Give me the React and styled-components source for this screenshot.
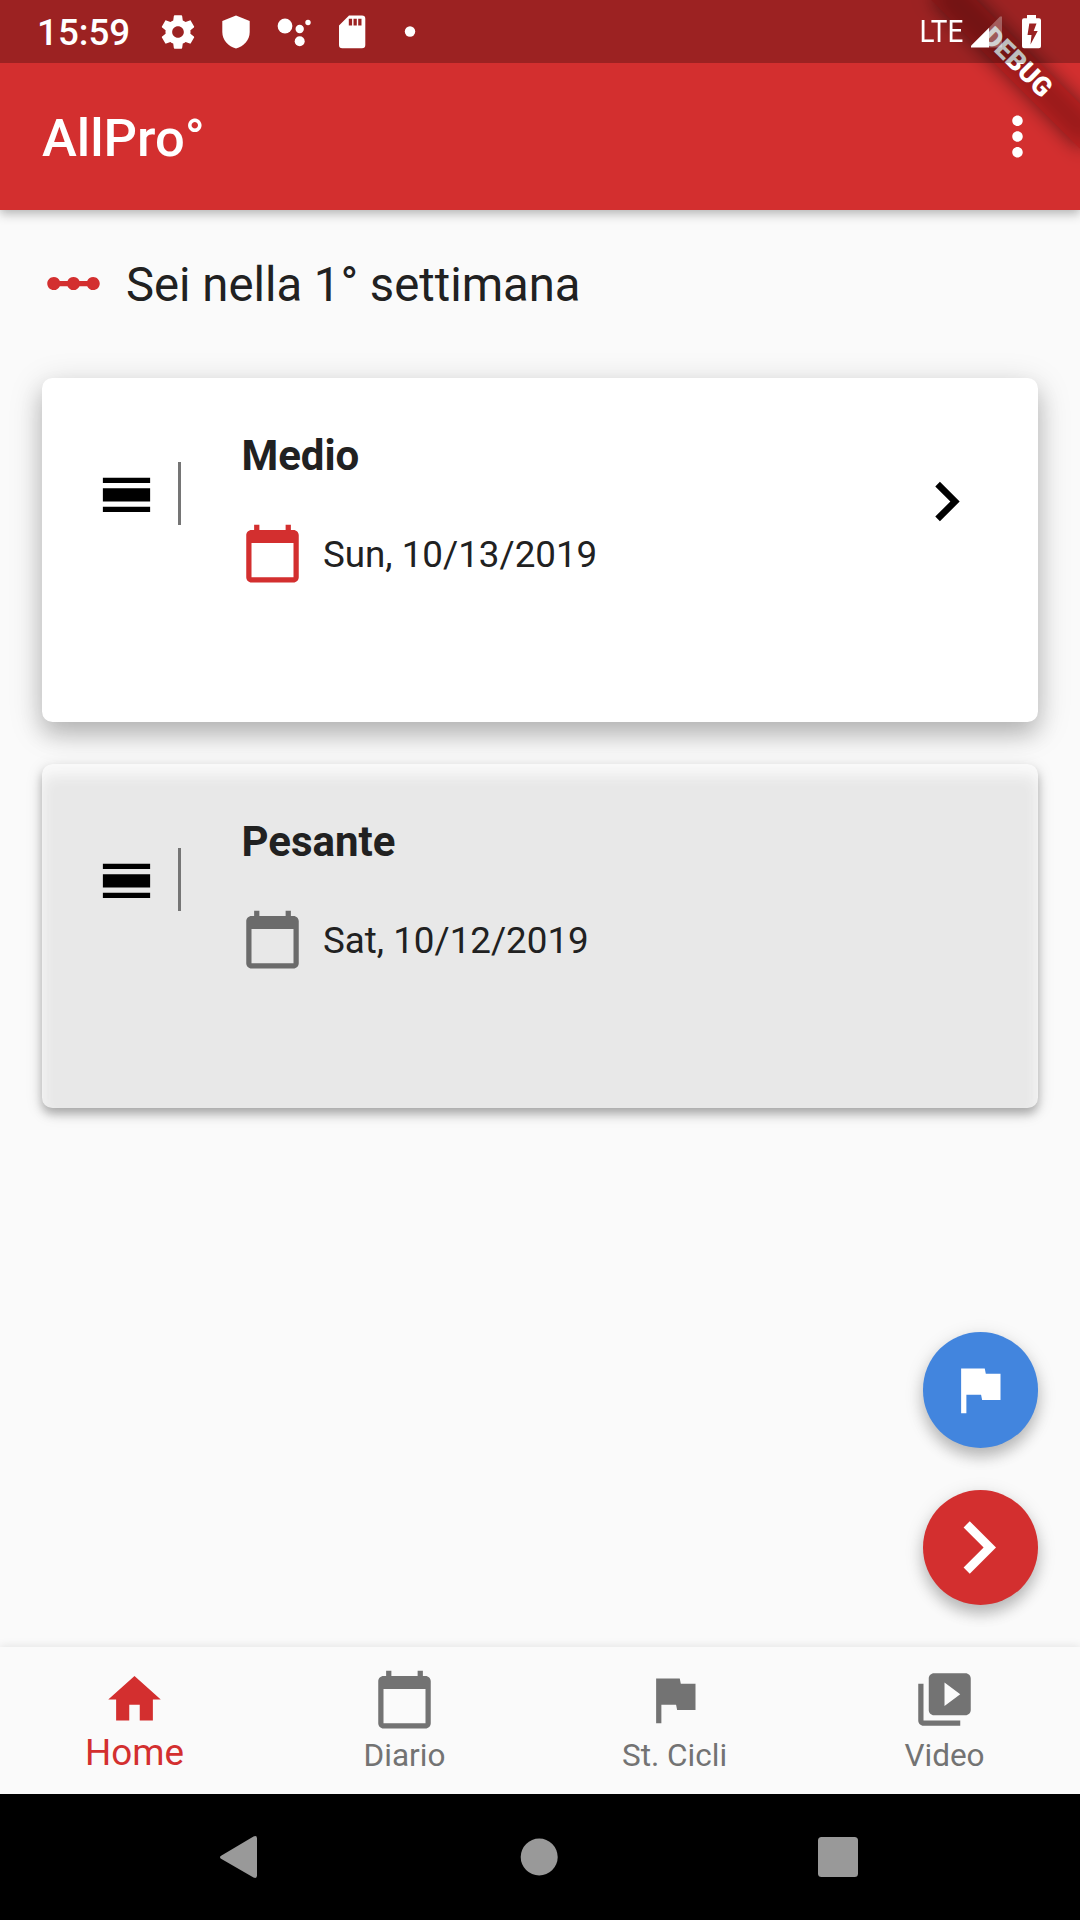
import styled, { createGlobalStyle } from 'styled-components'

const GlobalStyle = createGlobalStyle`
    * {
        box-sizing: border-box;
    }

    body {
        background: #fafafa;
        color: #212121;
        font-family: Roboto, "Liberation Sans", sans-serif;
        margin: 0;
    }
`

const Screen = styled.div`
    background: #fafafa;
    display: flex;
    flex-direction: column;
    height: 1920px;
    overflow: hidden;
    position: relative;
    width: 1080px;
`

const AppBar = styled.header`
    align-items: center;
    background: #d32f2f;
    box-shadow: 0 5px 10px rgba( 0, 0, 0, 0.2 ), 0 1px 8px rgba( 0, 0, 0, 0.1 );
    color: #fff;
    display: flex;
    flex: none;
    height: 210px;
    justify-content: space-between;
    padding: 63px 31.5px 0 42px;
`

const AppTitle = styled.h1`
    font-size: 52.5px;
    font-weight: 500;
    line-height: 62px;
    margin: 3px 0 0;
`

// The band is translucent, so its blurred shadow also darkens it from below
const DebugBanner = styled.div`
    color: #fff;
    font-size: 26.8px;
    font-weight: 900;
    height: 31.5px;
    line-height: 31.5px;
    position: absolute;
    right: -42px;
    text-align: center;
    top: 47.4px;
    transform: rotate( 45deg );
    width: 210px;

    &::before,
    &::after {
        content: "";
        inset: 0;
        position: absolute;
        z-index: -1;
    }

    &::before {
        background: rgba( 0, 0, 0, 0.5 );
        filter: blur( 9.6px );
    }

    &::after {
        background: rgba( 183, 28, 28, 0.627 );
    }
`

// Translucent system bar on top of the app bar
const StatusBar = styled.div`
    align-items: center;
    background: rgba( 0, 0, 0, 0.26 );
    color: #fff;
    display: flex;
    height: 63px;
    inset: 0 0 auto;
    justify-content: space-between;
    padding: 0 38px 0 37px;
    position: absolute;
`

const StatusGroup = styled.div`
    align-items: center;
    display: flex;
`

const Clock = styled.time`
    font-size: 36.75px;
    font-weight: 500;
    line-height: 44px;
    margin-top: 3px;
    width: 121px;
`

const Network = styled.span`
    font-size: 32px;
    line-height: 38px;
    margin: -2px -1px 0 0;
    transform: scaleX( 0.87 );
    transform-origin: right;
`

const Glyph = styled.svg`
    display: block;
    fill: currentColor;
    flex: none;
    height: ${ ( { $size = 63 } ) => $size }px;
    width: ${ ( { $size = 63 } ) => $size }px;
`

const StatusGlyph = styled( Glyph ).attrs( { viewBox: `0 0 40 40`, $size: 40 } )`
    margin-right: ${ ( { $gap = 0 } ) => $gap }px;
`

const Content = styled.main`
    display: flex;
    flex: 1;
    flex-direction: column;
    padding: 42px 42px 0;
    position: relative;
`

const WeekRow = styled.div`
    align-items: center;
    color: #d32f2f;
    display: flex;
    gap: 21px;
    height: 63px;
    margin-bottom: 63px;
`

const WeekText = styled.h2`
    color: #212121;
    font-size: 47.25px;
    font-weight: 400;
    line-height: 56px;
    margin: 2px 0 0;
`

const CardList = styled.div`
    display: flex;
    flex-direction: column;
    gap: 42px;
`

const Card = styled.article`
    background: ${ ( { $done } ) => $done ? `#e8e8e8` : `#fff` };
    border-radius: 10.5px;
    box-shadow: ${ ( { $done } ) => $done
        ? `0 6px 10px rgba( 0, 0, 0, 0.26 ), 0 4px 18px rgba( 0, 0, 0, 0.12 ), inset 0 11px 14px #fafafa`
        : `0 13px 22px rgba( 0, 0, 0, 0.16 ), 0 8px 34px rgba( 0, 0, 0, 0.18 )` };
    display: flex;
    height: 344px;
    padding: 53px 52.5px 0;
`

const Handle = styled.div`
    border-right: 3px solid #757575;
    color: #000;
    height: 63px;
    margin-top: 31px;
    width: 86.5px;
`

const Session = styled.div`
    flex: 1;
    padding-left: 60.4px;
`

const SessionName = styled.h3`
    font-size: 42px;
    font-weight: 700;
    line-height: 49px;
    margin: 0 0 42px;
`

const SessionDate = styled.div`
    align-items: center;
    color: #212121;
    display: flex;
    font-size: 36.75px;
    gap: 18.6px;
    line-height: 43px;
`

const DateText = styled.span`
    margin-top: 2px;
`

const CalendarIcon = styled( Glyph )`
    color: ${ ( { $done } ) => $done ? `#6b6b6b` : `#d32f2f` };
`

const OpenIcon = styled( Glyph )`
    color: #000;
    margin-top: 30.5px;
`

const FabColumn = styled.div`
    bottom: 42px;
    display: flex;
    flex-direction: column;
    gap: 42px;
    position: absolute;
    right: 42px;
`

const Fab = styled.button`
    align-items: center;
    background: ${ ( { $color } ) => $color };
    border: 0;
    border-radius: 50%;
    box-shadow: 0 9px 14px rgba( 0, 0, 0, 0.18 ), 0 5px 20px rgba( 0, 0, 0, 0.14 );
    color: #fff;
    display: flex;
    height: 115.5px;
    justify-content: center;
    padding: 0 ${ ( { $nudge = 0 } ) => $nudge }px 0 0;
    width: 115.5px;
`

const TabBar = styled.nav`
    background: #fafafa;
    box-shadow: 0 -2px 8px rgba( 0, 0, 0, 0.08 );
    display: grid;
    flex: none;
    grid-template-columns: repeat( 4, 1fr );
    height: 147px;
`

const Tab = styled.a`
    align-items: center;
    color: ${ ( { $active } ) => $active ? `#d32f2f` : `#737373` };
    display: flex;
    flex-direction: column;
    font-size: ${ ( { $active } ) => $active ? 36.75 : 31.5 }px;
    line-height: 43px;
    padding: 21px 1px 0 0;
`

const TabLabel = styled.span`
    margin-top: ${ ( { $active } ) => $active ? 0 : 3 }px;
`

const SystemBar = styled.footer`
    align-items: center;
    background: #000;
    color: #999;
    display: flex;
    flex: none;
    height: 126px;
    justify-content: space-between;
    padding: 0 214px 0 211px;
`

const paths = {
    calendar: `M20 3h-1V1h-2v2H7V1H5v2H4c-1.1 0-2 .9-2 2v16c0 1.1.9 2 2 2h16c1.1 0 2-.9 2-2V5c0-1.1-.9-2-2-2zm0 18H4V8h16v13z`,
    chevron: `M10 6L8.59 7.41 13.17 12l-4.58 4.59L10 18l6-6z`,
    flag: `M14.4 6L14 4H5v17h2v-7h5.6l.4 2h7V6z`,
    handle: `M3 17h18v2H3zm0-7h18v5H3zm0-4h18v2H3z`,
    home: `M10 20v-6h4v6h5v-8h3L12 3 2 12h3v8z`,
    more: `M12 8c1.1 0 2-.9 2-2s-.9-2-2-2-2 .9-2 2 .9 2 2 2zm0 2c-1.1 0-2 .9-2 2s.9 2 2 2 2-.9 2-2-.9-2-2-2zm0 6c-1.1 0-2 .9-2 2s.9 2 2 2 2-.9 2-2-.9-2-2-2z`,
    scale: `M19.5 9.5c-1.03 0-1.9.62-2.29 1.5h-2.92c-.39-.88-1.26-1.5-2.29-1.5s-1.9.62-2.29 1.5H6.79c-.39-.88-1.26-1.5-2.29-1.5C3.12 9.5 2 10.62 2 12s1.12 2.5 2.5 2.5c1.03 0 1.9-.62 2.29-1.5h2.92c.39.88 1.26 1.5 2.29 1.5s1.9-.62 2.29-1.5h2.92c.39.88 1.26 1.5 2.29 1.5 1.38 0 2.5-1.12 2.5-2.5s-1.12-2.5-2.5-2.5z`,
    video: `M4 6H2v14c0 1.1.9 2 2 2h14v-2H4V6zm16-4H8c-1.1 0-2 .9-2 2v12c0 1.1.9 2 2 2h12c1.1 0 2-.9 2-2V4c0-1.1-.9-2-2-2zm-8 12.5v-9l6 4.5-6 4.5z`
}

const sessions = [
    { name: `Medio`, date: `Sun, 10/13/2019`, done: false },
    { name: `Pesante`, date: `Sat, 10/12/2019`, done: true }
]

const tabs = [
    { label: `Home`, icon: `home`, active: true },
    { label: `Diario`, icon: `calendar` },
    { label: `St. Cicli`, icon: `flag` },
    { label: `Video`, icon: `video` }
]

function Icon( { name, size } ) {
    return <Glyph viewBox="0 0 24 24" aria-hidden="true" $size={ size }>
        <path d={ paths[ name ] } />
    </Glyph>
}

/**
 * One training session in the current week.
 * @param {Object} props
 * @returns {JSX.Element}
 */
function SessionCard( { name, date, done } ) {

    return <Card $done={ done }>
        <Handle><Icon name="handle" /></Handle>
        <Session>
            <SessionName>{ name }</SessionName>
            <SessionDate>
                <CalendarIcon viewBox="0 0 24 24" $done={ done }><path d={ paths.calendar } /></CalendarIcon>
                <DateText>{ date }</DateText>
            </SessionDate>
        </Session>
        { done ? null : <OpenIcon viewBox="0 0 24 24" $size={ 79 }><path d={ paths.chevron } /></OpenIcon> }
    </Card>

}

function SystemStatus() {

    return <StatusBar>
        <StatusGroup>
            <Clock>15:59</Clock>
            <StatusGlyph $gap={ 18 }>
                <path transform="scale( 1.6667 )" d="M19.43 12.98c.04-.32.07-.64.07-.98s-.03-.66-.07-.98l2.11-1.65c.19-.15.24-.42.12-.64l-2-3.46c-.12-.22-.39-.3-.61-.22l-2.49 1c-.52-.4-1.08-.73-1.69-.98l-.38-2.65C14.46 2.18 14.25 2 14 2h-4c-.25 0-.46.18-.49.42l-.38 2.65c-.61.25-1.17.59-1.69.98l-2.49-1c-.23-.09-.49 0-.61.22l-2 3.46c-.13.22-.07.49.12.64l2.11 1.65c-.04.32-.07.65-.07.98s.03.66.07.98l-2.11 1.65c-.19.15-.24.42-.12.64l2 3.46c.12.22.39.3.61.22l2.49-1c.52.4 1.08.73 1.69.98l.38 2.65c.03.24.24.42.49.42h4c.25 0 .46-.18.49-.42l.38-2.65c.61-.25 1.17-.59 1.69-.98l2.49 1c.23.09.49 0 .61-.22l2-3.46c.12-.22.07-.49-.12-.64l-2.11-1.65zM12 15.5c-1.93 0-3.5-1.57-3.5-3.5s1.57-3.5 3.5-3.5 3.5 1.57 3.5 3.5-1.57 3.5-3.5 3.5z" />
            </StatusGlyph>
            <StatusGlyph $gap={ 18 }>
                <path d="M20 3.5L33.7 9v11c0 8-6 14.500-13.700 16.500C12.300 34.500 6.300 28 6.300 20V9z" />
            </StatusGlyph>
            <StatusGlyph $gap={ 19 }>
                <circle cx="11" cy="14" r="7.4" />
                <circle cx="25.7" cy="17" r="4.2" />
                <circle cx="25.7" cy="29.3" r="5" />
                <circle cx="34" cy="10.5" r="2.7" />
            </StatusGlyph>
            <StatusGlyph $gap={ 17 }>
                <path fillRule="evenodd" d="M16 3.5H29A3.3 3.3 0 0 1 32.3 6.800V33A3.300 3.300 0 0 1 29 36.300H9.300A3.300 3.300 0 0 1 6 33V13.500zM15.800 6.800V13.500h3.300V6.800zm4.700 0V13.500h3.300V6.800zm4.700 0V13.500h3.300V6.800z" />
            </StatusGlyph>
            <StatusGlyph><circle cx="20" cy="19.5" r="5.2" /></StatusGlyph>
        </StatusGroup>
        <StatusGroup>
            <Network>LTE</Network>
            <StatusGlyph>
                <path d="M27 15.700L38 4.500H40V35.500H27z" opacity="0.3" />
                <path d="M9 35.500V33.800L27 15.700V35.500z" />
            </StatusGlyph>
            <StatusGlyph>
                <path fillRule="evenodd" d="M25 3h9v3.300h3a2 2 0 0 1 2 2v26a2 2 0 0 1-2 2h-15a2 2 0 0 1-2-2v-26a2 2 0 0 1 2-2h3zM27.300 11.500L25.500 23h4L28.500 32.500 35.700 19h-4l2.800-7.500z" />
            </StatusGlyph>
        </StatusGroup>
    </StatusBar>

}

export default function App() {

    return <>
        <GlobalStyle />
        <Screen>
            <AppBar>
                <AppTitle>AllPro°</AppTitle>
                <Icon name="more" />
            </AppBar>

            <Content>
                <WeekRow>
                    <Icon name="scale" />
                    <WeekText>Sei nella 1° settimana</WeekText>
                </WeekRow>
                <CardList>
                    { sessions.map( session => <SessionCard key={ session.name } { ...session } /> ) }
                </CardList>
                <FabColumn>
                    <Fab $color="#4285de" $nudge={ 1 } aria-label="Flag"><Icon name="flag" /></Fab>
                    <Fab $color="#d32f2f" $nudge={ 4 } aria-label="Next"><Icon name="chevron" size={ 105 } /></Fab>
                </FabColumn>
            </Content>

            <TabBar>
                { tabs.map( ( { label, icon, active } ) => <Tab key={ label } $active={ active }>
                    <Icon name={ icon } />
                    <TabLabel $active={ active }>{ label }</TabLabel>
                </Tab> ) }
            </TabBar>

            <SystemBar>
                <Glyph viewBox="0 0 56 56" $size={ 56 }>
                    <path d="M10.5 26.5L42.5 7.5Q46 6 46 9.5V46.5Q46 50 42.5 48.5L10.5 30Q7.5 28.2 10.5 26.5z" />
                </Glyph>
                <Glyph viewBox="0 0 56 56" $size={ 56 }><circle cx="28.2" cy="28" r="18.5" /></Glyph>
                <Glyph viewBox="0 0 56 56" $size={ 56 }><rect x="8" y="8" width="40" height="40" rx="3.5" /></Glyph>
            </SystemBar>

            <DebugBanner>DEBUG</DebugBanner>
            <SystemStatus />
        </Screen>
    </>

}
